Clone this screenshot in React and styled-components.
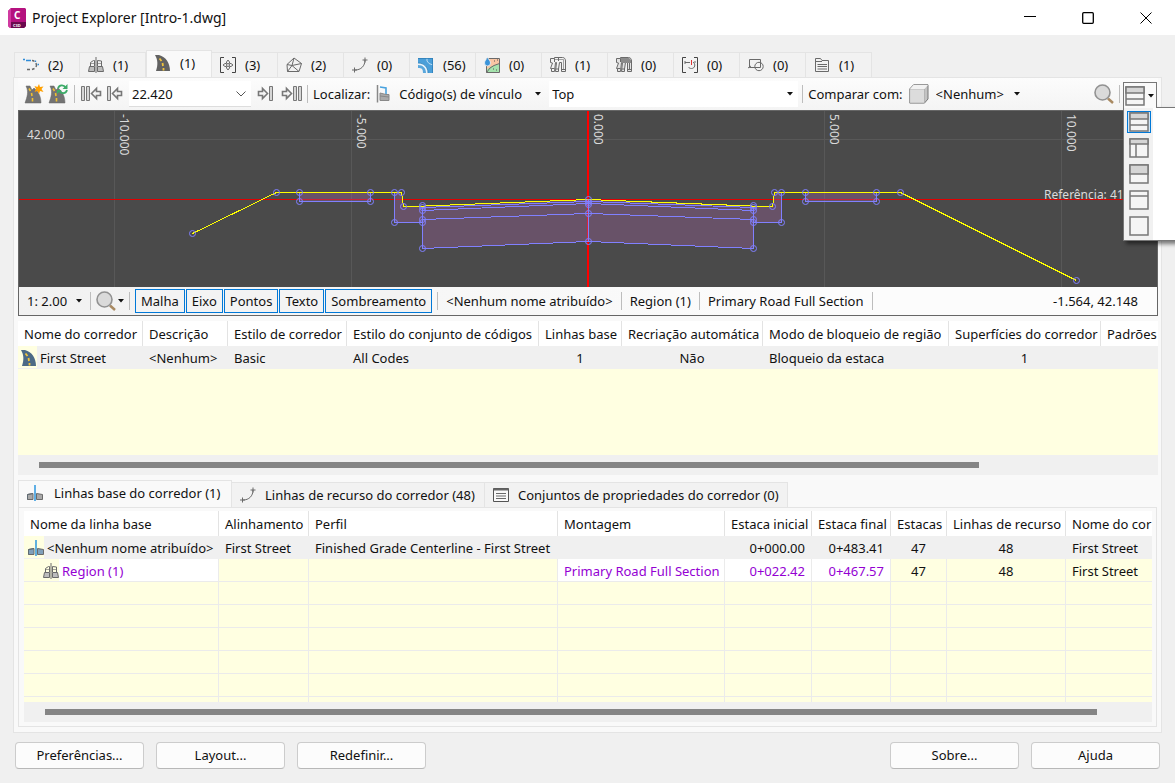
import React from 'react';
import styled, { createGlobalStyle, css } from 'styled-components';

const GlobalStyle = createGlobalStyle`
  *, *::before, *::after { box-sizing: border-box; }
  body {
    margin: 0;
    background: #f0f0f0;
    color: #111;
    font-family: "Noto Sans", "Open Sans", sans-serif;
    font-size: 13px;
    line-height: 18px;
  }
  button, select, input { font: inherit; color: inherit; }
`;

/* ---------- window frame ---------- */

const Window = styled.div`
  min-height: 100vh;
  display: flex;
  flex-direction: column;
  overflow: hidden;
`;

const TitleBar = styled.header`
  display: flex;
  align-items: center;
  height: 35px;
  padding-left: 8px;
  background: #fff;
`;

const Title = styled.h1`
  flex: 1;
  margin: 0 0 0 6px;
  font-size: 14px;
  font-weight: 400;
  line-height: 20px;
`;

const CaptionButton = styled.button`
  display: grid;
  place-items: center;
  width: 58px;
  height: 32px;
  padding: 0;
  border: 0;
  background: none;
`;

const Main = styled.main`
  flex: 1;
  padding: 15px 13px 0;
`;

/* ---------- tabs ---------- */

const TabList = styled.div`
  display: flex;
  align-items: flex-end;
  height: 27px;
  padding-left: 1px;
`;

const Tab = styled.button`
  display: flex;
  align-items: center;
  gap: ${(p) => p.$gap || 9}px;
  min-width: ${(p) => p.$width}px;
  height: 25px;
  padding: 0 0 0 8px;
  border: 1px solid #e4e4e4;
  border-left-width: 0;
  border-bottom: 0;
  background: #f2f2f2;
  white-space: nowrap;
  &:first-child { border-left-width: 1px; }
  ${(p) => p.$active && css`
    height: 27px;
    padding-bottom: 2px;
    border-left-width: 1px;
    background: #f9f9f9;
    z-index: 1;
  `}
  svg { flex: none; }
`;

const Panel = styled.section`
  padding: 0 3px 5px 4px;
  border: 1px solid #e4e4e4;
  background: #f9f9f9;
`;

/* ---------- toolbar ---------- */

const Toolbar = styled.div`
  display: flex;
  align-items: center;
  height: 32px;
  padding-left: 4px;
  background: linear-gradient(#fcfcfc, #f4f4f4);
  white-space: nowrap;
`;

const ToolButton = styled.button`
  display: grid;
  place-items: center;
  flex: none;
  width: ${(p) => p.$width || 24}px;
  height: 26px;
  padding: 0;
  border: 0;
  background: none;
`;

const Separator = styled.span`
  flex: none;
  width: 1px;
  height: 18px;
  margin: 0 ${(p) => p.$gap || 4}px;
  background: #bdbdbd;
`;

const SelectBox = styled.span`
  position: relative;
  display: inline-flex;
  align-items: center;
  flex: ${(p) => (p.$grow ? '0 1 249px' : 'none')};
  height: 26px;
  margin-left: ${(p) => p.$before || 0}px;
  background: ${(p) => (p.$filled ? '#fff' : 'none')};
  border-bottom: ${(p) => (p.$line ? '1px solid #ddd' : '0')};
  > svg {
    position: absolute;
    right: ${(p) => p.$inset || 5}px;
    pointer-events: none;
  }
`;

const Select = styled.select`
  appearance: none;
  width: ${(p) => (p.$width ? `${p.$width}px` : '100%')};
  height: 24px;
  padding: 0 0 0 3px;
  border: 0;
  background: none;
  outline: 0;
`;

const Label = styled.label`
  flex: none;
  margin: 0 6px 0 1px;
`;

const Spacer = styled.span`
  flex: 1;
`;

const LayoutPicker = styled.div`
  position: relative;
  align-self: flex-end;
  flex: none;
  width: 35px;
  height: 28px;
`;

const LayoutToggle = styled.button`
  position: relative;
  z-index: 3;
  display: flex;
  align-items: center;
  gap: 3px;
  width: 34px;
  height: 26px;
  padding: 0 0 0 1px;
  border: 1px solid #777;
  border-bottom: 0;
  background: #fafafa;
`;

const LayoutMenu = styled.div`
  position: absolute;
  z-index: 2;
  top: 25px;
  left: 0;
  width: 190px;
  padding: 3px;
  border: 1px solid #777;
  background: linear-gradient(90deg, #f1f1f1 29px, #fff 29px);
  box-shadow: 3px 3px 4px rgba(0, 0, 0, 0.5);
`;

const LayoutItem = styled.button`
  display: grid;
  place-items: center;
  width: 24px;
  height: 22px;
  margin-bottom: 4px;
  padding: 0;
  border: 1px solid ${(p) => (p.$selected ? '#0078d7' : 'transparent')};
  background: ${(p) => (p.$selected ? '#cfe6f8' : 'none')};
  &:last-child { margin-bottom: 0; }
`;

/* ---------- section viewer ---------- */

const Viewer = styled.div`
  border: 1px solid #666;
`;

const Drawing = styled.svg`
  display: block;
  width: 100%;
  height: 176px;
  background: #4a4a4a;
  text { fill: #dadada; font-size: 12px; }
`;

const StatusBar = styled.div`
  display: flex;
  align-items: center;
  height: 28px;
  padding: 0 19px 0 5px;
  background: linear-gradient(90deg, #f1f1f1, #fcfcfc 70%);
  white-space: nowrap;
`;

const Toggle = styled.button`
  height: 24px;
  margin-right: 1px;
  padding: 0 5px;
  border: 1px solid #0078d7;
  background: #f3f3f3;
`;

const StatusText = styled.span`
  padding: 0 4px;
`;

/* ---------- tables ---------- */

const Grid = styled.div`
  height: ${(p) => p.$height}px;
  margin-top: ${(p) => p.$before}px;
  overflow: hidden;
  background: #ffffe1;
`;

const Table = styled.table`
  width: 100%;
  table-layout: fixed;
  border-collapse: separate;
  border-spacing: 0;
  white-space: nowrap;
`;

const Th = styled.th`
  height: 25px;
  padding: 0 0 0 6px;
  overflow: hidden;
  border-right: 1px solid #e3e3e3;
  background: #fff;
  font-weight: 400;
  text-align: left;
  &:last-child { border-right: 0; }
`;

const Td = styled.td`
  height: 23px;
  padding: 1px 6px 0;
  overflow: hidden;
  border-right: 1px solid ${(p) => (p.$shade ? '#f0f0f0' : '#ebebeb')};
  border-bottom: 1px solid ${(p) => (p.$shade ? '#f0f0f0' : '#ebebeb')};
  background: ${(p) => (p.$shade ? '#f0f0f0' : p.$edit ? '#fff' : 'transparent')};
  color: ${(p) => (p.$edit ? '#9400d3' : 'inherit')};
  text-align: ${(p) => p.$align || 'left'};
  &:last-child { border-right: 0; }
`;

const NameCell = styled.span`
  display: flex;
  align-items: center;
  height: 21px;
  margin: 0 -6px;
`;

const NameIcon = styled.span`
  display: flex;
  justify-content: flex-end;
  align-items: center;
  width: ${(p) => p.$width}px;
  height: 23px;
  margin-right: 3px;
  background: #ffffe1;
`;

const ScrollTrack = styled.div`
  height: 20px;
  padding: 7px 0 0 21px;
  background: #f0f0f0;
`;

const ScrollThumb = styled.div`
  height: 6px;
  width: ${(p) => p.$share}%;
  background: #858585;
`;

const DetailTabs = styled(TabList)`
  margin-top: 5px;
  padding-left: 0;
`;

const DetailPanel = styled.div`
  margin-right: 1px;
  padding: 0 4px 4px 5px;
  border: 1px solid #e4e4e4;
`;

/* ---------- footer ---------- */

const Footer = styled.footer`
  display: flex;
  gap: 12px;
  padding: 9px 15px 14px;
`;

const PushButton = styled.button`
  width: 129px;
  height: 27px;
  padding: 0 0 1px;
  border: 1px solid #ccc;
  border-bottom-color: #b8b8b8;
  border-radius: 4px;
  background: #fcfcfc;
`;

/* ---------- icons ---------- */

const Svg = ({ w = 16, h = w, children, ...rest }) => (
  <svg width={w} height={h} viewBox={`0 0 ${w} ${h}`} fill="none" stroke="#6a6a6a" aria-hidden="true" {...rest}>
    {children}
  </svg>
);

const Logo = () => (
  <Svg w={18} h={20} stroke="none">
    <path d="M0 3 3 0H17l1 1V18l-2 2H2L0 18Z" fill="#b5127f" />
    <path d="M0 3 3 0V20H2L0 18Z" fill="#d03aa0" />
    <path d="M3 14H18V18l-2 2H3Z" fill="#6b0a4e" />
    <text x="6" y="11" fontSize="10" fontWeight="700" fill="#fff">C</text>
    <text x="5" y="19" fontSize="4" fontWeight="700" fill="#fff">C3D</text>
  </Svg>
);

const Caret = () => (
  <Svg w={6} h={4} stroke="none"><path d="M0 0H6L3 3.5Z" fill="#111" /></Svg>
);

const Chevron = () => (
  <Svg w={10} h={6} stroke="#555"><path d="M.5.5 5 5 9.5.5" /></Svg>
);

const AlignmentIcon = () => (
  <Svg>
    <path d="M0 2.500H2M3 3.500H8" stroke="#2e8bd8" strokeWidth="1.300" />
    <path d="M9 3.500C10 3.500 11 4 11.500 4.500M13 6 13.500 8.500 13 10M11.500 11.500 9 12.500M7 12.500H4" strokeWidth="1.400" />
    <path d="M12.500 3.500V5M14.500 7.500H16" stroke="#2e8bd8" strokeWidth="1.300" />
  </Svg>
);

const AssemblyIcon = () => (
  <Svg>
    <path d="M8 0V16" />
    <path d="M1.500 9.500H6.500V14.500H.5ZM9.500 9.500H14.500L15.500 14.500H9.500Z" fill="#bdbdbd" />
    <path d="M2.500 9V5.500L5.500 3.500H6.500V9M9.500 9V3.500L13.500 4V9" />
    <path d="M3 6.500H6M10 6.500H13" strokeOpacity=".6" />
  </Svg>
);

const BaselineIcon = ({ fill = '#a8a8a8' }) => (
  <Svg>
    <path d="M.5 9.500 6 8.500V14.500H.5ZM9.500 8.500 15.500 9.500V14.500H9.500Z" fill={fill} />
    <path d="M.5 14.500V9.500L6 8.500" stroke="#5f6a72" />
    <path d="M8 0V16" stroke="#1e90dd" strokeWidth="1.4" />
  </Svg>
);

const RoadIcon = ({ fill = '#626262' }) => (
  <Svg stroke="none">
    <path d="M0 0H4C11 2 15 8 15 16H1C3 10 3 5 0 0Z" fill={fill} />
    <path d="M4.500 3.500 6.500 6M7.500 8 8 11M8.500 13V15.500" stroke="#f2c53d" strokeWidth="1.800" />
  </Svg>
);

const IntersectionIcon = () => (
  <Svg>
    <path d="M4 .5H.5V15.500H4M12 .5H15.500V15.500H12" stroke="#444" />
    <path d="M6.500 5 8 3 9.500 5V6.500H11L13 8 11 9.500H9.500V11L8 13 6.500 11V9.500H5L3 8 5 6.500H6.500Z" />
    <circle cx="8" cy="8" r="1.500" />
  </Svg>
);

const SurfaceIcon = () => (
  <Svg>
    <path d="M8 1 15.500 6.500 13 14.500H1.500L1 7.500ZM8 1 6 8.500 1 7.500M6 8.500 13 14.500M6 8.500 1.500 14.500M6 8.500 15.500 6.500" />
  </Svg>
);

const FeatureLineIcon = () => (
  <Svg>
    <path d="M3 13C9 13 13 9 13 3" />
    <path d="M2.500 10.500V15.500M0 13H5M13 .5V5.500M10.500 3H15.500" />
  </Svg>
);

const ParcelIcon = () => (
  <Svg stroke="none">
    <path d="M0 1H15V16H10C10 10 6 6 0 6Z" fill="#4b9fd9" />
    <path d="M0 6C6 6 10 10 10 16H5C5 12 4 11 0 11Z" fill="#eaf4fb" />
    <path d="M0 8C5 8 8 11 8 16H5C5 12 4 11 0 11Z" fill="#5aa7dc" />
    <path d="M9 1V4L11 6.500 15 8" stroke="#bcdcf2" />
    <path d="M0 6C6 6 10 10 10 16M0 1.500H15M14.500 1V16" stroke="#2f7fb8" strokeWidth=".8" />
  </Svg>
);

const CatchmentIcon = () => (
  <Svg>
    <path d="M2.500 1.500H15.500V15.500H2.500Z" fill="#f9c6a4" />
    <path d="M3 15V12L8 9 15 7V15Z" fill="#a5e3ad" stroke="none" />
    <path d="M2.500 15.500 6 11 10 8.500 15.500 6.500" />
    <path d="M3.500 0C5 3 6.500 4 6.500 6A3 3 0 0 1 .5 6C.5 4 2 3 3.500 0Z" fill="#3b94d9" stroke="#f2f2f2" strokeWidth=".8" />
    <path d="M10 4h1M13 3h1M9 12h1M12 13h1" stroke="#555" />
  </Svg>
);

const PipeIcon = ({ fill = '#f2f2f2' }) => (
  <Svg>
    <path d="M.5 1.500H4.500V.5H12.500C14.500.5 15.500 2 15.500 4V14.500H11.500V5.500H9.500L8.500 12V14.500H5.500L6.500 5.500H5.500L4.500 14.500H1.500V11.500H.5L2.500 6 .5 5.500Z" fill={fill} />
    <path d="M4.500 1.500V5M11.500 12.500H15.500M5.500 12H8.500M1.500 11.500H4.500M8.500.5V4" />
    <path d="M5 2.500H13.500V12" strokeOpacity=".6" />
  </Svg>
);

const PressureIcon = () => (
  <Svg>
    <path d="M.5 1.500H4.500V.5H12.500C14.500.5 15.500 2 15.500 4V14.500H11.500V5.500H9.500L8.500 12V14.500H5.500L6.500 5.500H5.500L4.500 14.500H1.500V11.500H.5L2.500 6 .5 5.500Z" fill="#e2e2e2" />
    <path d="M5 1H13L15 3V6H5Z" fill="#8a8a8a" stroke="none" />
    <path d="M4.500 1.500V5M11.500 12.500H15.500M5.500 12H8.500M1.500 11.500H4.500M13.500 6V12" />
  </Svg>
);

const ValveIcon = () => (
  <Svg>
    <path d="M4 .5H.5V15.500H4M12 .5H15.500V15.500H12" stroke="#444" />
    <path d="M3 5.500H8M3 4V7M13 4V6" />
    <path d="M9.500 3V8" stroke="#d33" />
    <path d="M11 5C14 7 13 11.500 9.500 11.500C8 11.500 7 11 6.500 10" />
  </Svg>
);

const ShapesIcon = () => (
  <Svg>
    <path d="M1.500 2.500H12.500V10.500H1.500Z" />
    <circle cx="11" cy="9.500" r="4.200" />
    <path d="M0 11 3 9" />
  </Svg>
);

const PropertySetIcon = () => (
  <Svg>
    <path d="M1.500 1.500H6.500L8 3.500H14.500V14.500H1.500Z" />
    <path d="M1.500 4.500H8M4 7.500H13M4 9.500H13M4 12H13M3 7.500h.5M3 9.500h.5M3 12h.5" />
  </Svg>
);

const ListIcon = () => (
  <Svg>
    <path d="M.5 1.500H15.500V14.500H.5Z" fill="#fafafa" stroke="#555" />
    <path d="M.5 2.500H15.500" strokeWidth="2" stroke="#666" />
    <path d="M3 6.500H13M3 9H13M3 11.500H13" />
  </Svg>
);

const RoadBase = () => (
  <>
    <path d="M2 2C5 8 3 13 1 19H17C17 12 14 7 10 4L8 6 6 2Z" fill="#737373" stroke="#666" strokeWidth=".5" />
    <path d="M5 4.500 6.500 7M7.500 9 8 12M8.500 14V17.500" stroke="#f0c030" strokeWidth="1.600" />
  </>
);

const CreateRoadIcon = () => (
  <Svg w={20}>
    <RoadBase />
    <path d="M15 0 16 3 19.500 2.500 17.500 5 19.500 8 16 7 15 10 13.500 7 10.500 8 12 5 10.500 2 13.500 3Z" fill="#ffa000" stroke="none" />
  </Svg>
);

const RebuildRoadIcon = () => (
  <Svg w={20}>
    <RoadBase />
    <path d="M10 4.500C11 .5 16 .5 17.500 3.500M19 6C18 10 13 10 11.500 7" stroke="#3cab68" strokeWidth="1.800" />
    <path d="M19.500 0V5H14.500ZM9 10V6H13.500Z" fill="#3cab68" stroke="none" />
  </Svg>
);

const SkipIcon = ({ bars, flip }) => {
  const w = bars === 2 ? 21 : 16;
  const shift = bars === 2 ? 5 : 0;
  return (
    <Svg w={w} h={18} stroke="#777">
      <g transform={flip ? `translate(${w} 0) scale(-1 1)` : undefined}>
        <path d="M.5 1.500h3v14h-3Z" fill="#d6d6d6" />
        {bars === 2 && <path d="M5.500 1.500h3v14h-3Z" fill="#d6d6d6" />}
        <path transform={`translate(${shift} 0)`} d="M5.500 8.500 10.500 3.500V6.500H14.500V10.500H10.500V13.500Z" fill="#f5f5f5" strokeWidth="1.600" />
      </g>
    </Svg>
  );
};

const LinkCodeIcon = () => (
  <Svg w={16} h={20}>
    <path d="M1.500 1V18.500" stroke="#888" strokeWidth="1.500" />
    <path d="M4 3 10 4V10" stroke="#4aa3df" strokeWidth="1.600" />
    <path d="M4 9 10 10.500H13V16.500H4ZM4 12 13 13" fill="#aaa" stroke="#888" />
  </Svg>
);

const CubeIcon = () => (
  <Svg w={20}>
    <path d="M.7 5 4.500.8H19V15L15.500 19H.7Z" fill="#c3c3c3" stroke="#777" />
    <path d="M.7 5H15.500V19H.7Z" fill="#dcdcdc" stroke="#999" strokeWidth=".5" />
    <path d="M1 5 4.500 1H19L15.500 5Z" fill="#f2f2f2" stroke="none" />
  </Svg>
);

const Magnifier = () => (
  <Svg w={20}>
    <path d="M14 14.500 19 19" stroke="#a98a62" strokeWidth="2.500" />
    <circle cx="8.500" cy="8.500" r="7.500" fill="#dadada" stroke="#929292" strokeWidth="1.600" />
  </Svg>
);

const LayoutIcon = ({ head, lines, split }) => (
  <Svg w={20} stroke="#777" strokeWidth="1.500">
    <path d="M1 1H19V19H1Z" fill="#f5f5f5" />
    {head && <path d={`M1 1H19V${head}H1Z`} fill="#d5d5d5" />}
    {lines && lines.map((y) => <path key={y} d={`M1 ${y}H19`} />)}
    {split && <path d={`M7 ${split}V19`} />}
  </Svg>
);

const layouts = [
  { name: 'Três painéis', head: 7, lines: [13] },
  { name: 'Painéis divididos', head: 6, split: 6 },
  { name: 'Dois painéis', head: 10 },
  { name: 'Cabeçalho', lines: [6] },
  { name: 'Painel único' },
];

/* ---------- cross section drawing ---------- */

const nodes = [
  [192, 233], [276, 192], [299, 192], [299, 201], [370, 201], [370, 192], [394, 192], [401, 192],
  [403, 206], [394, 222], [422, 205], [422, 207], [422, 210], [422, 219], [422, 222], [422, 248],
  [588, 199], [588, 202], [588, 204], [588, 213], [588, 241],
  [753, 205], [753, 207], [753, 210], [753, 219], [753, 222], [753, 248], [781, 222], [772, 206],
  [774, 192], [781, 192], [805, 192], [805, 201], [876, 201], [876, 192], [900, 192], [1076, 280],
];

const stations = [[114, '-10.000'], [351, '-5.000'], [588, '0.000'], [824, '5.000'], [1061, '10.000']];

const CrossSection = () => (
  <Drawing viewBox="19 111 1138 176" role="img" aria-label="Seção do corredor">
    <g stroke="#585858">
      <path d="M-2000 139.500H3000" />
      {stations.map(([x]) => <path key={x} d={`M${x + 0.5} 111V287`} />)}
    </g>
    <path d="M-2000 199.500H3000" stroke="#e00000" shapeRendering="crispEdges" />
    <path d="M588 111V287" stroke="#f00" strokeWidth="2" />
    <g fill="#a060a0" fillOpacity=".35">
      <path d="M299.500 192.500H370.500V201.500H299.500ZM805.500 192.500H876.500V201.500H805.500Z" />
      <path d="M394.500 192.500H401.500L403.500 206.500 588.500 199.500 772.500 206.500 774.500 192.500H781.500V222.500H753.500V248.500L588.500 241.500 422.500 248.500V222.500H394.500Z" />
    </g>
    <g fill="none" stroke="#8080ff" shapeRendering="crispEdges">
      <path d="M299.500 192.500V201.500H370.500V192.500M805.500 192.500V201.500H876.500V192.500" />
      <path d="M394.500 192.500V222.500H422.500M781.500 192.500V222.500H753.500" />
      <path d="M422.500 205.500V248.500L588.500 241.500 753.500 248.500V205.500" />
      <path d="M422.500 207.500 588.500 201.500 753.500 207.500M422.500 210.500 588.500 203.500 753.500 210.500M422.500 219.500 588.500 213.500 753.500 219.500" />
      <path d="M588.500 200V241" />
    </g>
    <path
      d="M192.500 233.500 276.500 192.500H401.500L403.500 206.500H412L588.500 199.500 764 206.500H772.500L774.500 192.500H900.500L1076.500 280.500"
      fill="none" stroke="#ff0" shapeRendering="crispEdges"
    />
    <g fill="none" stroke="#8080ff">
      {nodes.map(([x, y]) => <circle key={`${x}-${y}`} cx={x + 0.5} cy={y + 0.5} r="3" />)}
    </g>
    <text x="27" y="139">42.000</text>
    {stations.map(([x, name]) => (
      <text key={name} transform={`translate(${x + 6} 114) rotate(90)`}>{name}</text>
    ))}
    <text x="1044" y="199">Referência: 41</text>
  </Drawing>
);

/* ---------- data ---------- */

const tabs = [
  ['Alinhamentos', AlignmentIcon, 2], ['Montagens', AssemblyIcon, 1], ['Corredores', RoadIcon, 1],
  ['Interseções', IntersectionIcon, 3], ['Superfícies', SurfaceIcon, 2], ['Linhas de recurso', FeatureLineIcon, 0],
  ['Lotes', ParcelIcon, 56], ['Bacias', CatchmentIcon, 0], ['Redes de tubulação', PipeIcon, 1],
  ['Redes de pressão', PressureIcon, 0], ['Acessórios', ValveIcon, 0], ['Formas', ShapesIcon, 0],
  ['Conjuntos de objetos', PropertySetIcon, 1],
];

const corridorColumns = [
  ['Nome do corredor', 125], ['Descrição', 85], ['Estilo de corredor', 119],
  ['Estilo do conjunto de códigos', 192], ['Linhas base', 83], ['Recriação automática', 141],
  ['Modo de bloqueio de região', 186], ['Superfícies do corredor', 152], ['Padrões'],
];

const baselineColumns = [
  ['Nome da linha base', 195], ['Alinhamento', 90], ['Perfil', 249], ['Montagem', 167],
  ['Estaca inicial', 87], ['Estaca final', 79], ['Estacas', 56], ['Linhas de recurso', 119],
  ['Nome do cor'],
];

const Head = ({ columns }) => (
  <>
    <colgroup>
      {columns.map(([name, width]) => <col key={name} width={width} />)}
    </colgroup>
    <thead>
      <tr>{columns.map(([name]) => <Th key={name} scope="col">{name}</Th>)}</tr>
    </thead>
  </>
);

export default function App() {
  return (
    <Window>
      <GlobalStyle />
      <TitleBar>
        <Logo />
        <Title>Project Explorer [Intro-1.dwg]</Title>
        <CaptionButton aria-label="Minimizar"><Svg w={12} stroke="#000"><path d="M0 4.500H12" /></Svg></CaptionButton>
        <CaptionButton aria-label="Maximizar">
          <Svg w={12} stroke="#000" strokeWidth="1.300"><rect x=".7" y=".7" width="10.600" height="10.600" rx="1" /></Svg>
        </CaptionButton>
        <CaptionButton aria-label="Fechar"><Svg w={12} stroke="#000"><path d="M.5.5 11.500 11.500M11.500.5.5 11.500" /></Svg></CaptionButton>
      </TitleBar>

      <Main>
        <TabList role="tablist">
          {tabs.map(([name, Icon, count]) => (
            <Tab key={name} role="tab" aria-label={`${name} (${count})`} aria-selected={name === 'Corredores'} $active={name === 'Corredores'} $width={66}>
              <Icon />({count})
            </Tab>
          ))}
        </TabList>

        <Panel>
          <Toolbar>
            <ToolButton aria-label="Criar corredor"><CreateRoadIcon /></ToolButton>
            <ToolButton aria-label="Recriar corredor"><RebuildRoadIcon /></ToolButton>
            <Separator />
            <ToolButton aria-label="Primeira estaca"><SkipIcon bars={2} /></ToolButton>
            <ToolButton aria-label="Estaca anterior"><SkipIcon bars={1} /></ToolButton>
            <SelectBox $filled $line $before={2}>
              <Select aria-label="Estaca" $width={122}><option>22.420</option></Select>
              <Chevron />
            </SelectBox>
            <ToolButton aria-label="Próxima estaca" $width={28}><SkipIcon bars={1} flip /></ToolButton>
            <ToolButton aria-label="Última estaca"><SkipIcon bars={2} flip /></ToolButton>
            <Separator />
            <Label htmlFor="locate">Localizar:</Label>
            <LinkCodeIcon />
            <SelectBox $before={4}>
              <Select id="locate" $width={150}><option>Código(s) de vínculo</option></Select>
              <Caret />
            </SelectBox>
            <SelectBox $filled $grow $before={3}>
              <Select aria-label="Código"><option>Top</option></Select>
              <Caret />
            </SelectBox>
            <Separator />
            <Label htmlFor="compare">Comparar com:</Label>
            <CubeIcon />
            <SelectBox $before={4}>
              <Select id="compare" $width={92}><option>&lt;Nenhum&gt;</option></Select>
              <Caret />
            </SelectBox>
            <Spacer />
            <ToolButton aria-label="Zoom"><Magnifier /></ToolButton>
            <Separator $gap={3} />
            <LayoutPicker>
              <LayoutToggle aria-label="Layout dos painéis" aria-expanded="true">
                <LayoutIcon head={7} lines={[13]} />
                <Caret />
              </LayoutToggle>
              <LayoutMenu role="menu">
                {layouts.map(({ name, ...shape }, i) => (
                  <LayoutItem key={name} role="menuitemradio" aria-checked={i === 0} aria-label={name} $selected={i === 0}>
                    <LayoutIcon {...shape} />
                  </LayoutItem>
                ))}
              </LayoutMenu>
            </LayoutPicker>
          </Toolbar>

          <Viewer>
            <CrossSection />
            <StatusBar>
              <SelectBox>
                <Select aria-label="Exagero" $width={63}><option>1: 2.00</option></Select>
                <Caret />
              </SelectBox>
              <Separator $gap={3} />
              <ToolButton aria-label="Opções de zoom"><Magnifier /></ToolButton>
              <Caret />
              <Separator $gap={5} />
              {['Malha', 'Eixo', 'Pontos', 'Texto', 'Sombreamento'].map((name) => (
                <Toggle key={name} aria-pressed="true">{name}</Toggle>
              ))}
              <Separator />
              <StatusText>&lt;Nenhum nome atribuído&gt;</StatusText>
              <Separator />
              <StatusText>Region (1)</StatusText>
              <Separator />
              <StatusText>Primary Road Full Section</StatusText>
              <Separator />
              <Spacer />
              <span>-1.564, 42.148</span>
            </StatusBar>
          </Viewer>

          <Grid $height={134} $before={5}>
            <Table>
              <Head columns={corridorColumns} />
              <tbody>
                <tr>
                  <Td $shade>
                    <NameCell><NameIcon $width={19}><RoadIcon fill="#4c6a86" /></NameIcon>First Street</NameCell>
                  </Td>
                  <Td $shade>&lt;Nenhum&gt;</Td>
                  <Td $shade>Basic</Td>
                  <Td $shade>All Codes</Td>
                  <Td $shade $align="center">1</Td>
                  <Td $shade $align="center">Não</Td>
                  <Td $shade>Bloqueio da estaca</Td>
                  <Td $shade $align="center">1</Td>
                  <Td $shade />
                </tr>
              </tbody>
            </Table>
          </Grid>
          <ScrollTrack><ScrollThumb $share={84} /></ScrollTrack>

          <DetailTabs role="tablist">
            <Tab role="tab" aria-selected="true" $active $gap={11} $width={214}><BaselineIcon />Linhas base do corredor (1)</Tab>
            <Tab role="tab" aria-selected="false" $width={253}><FeatureLineIcon />Linhas de recurso do corredor (48)</Tab>
            <Tab role="tab" aria-selected="false" $width={303}><ListIcon />Conjuntos de propriedades do corredor (0)</Tab>
          </DetailTabs>
          <DetailPanel>
            <Grid $height={191} $before={3}>
              <Table>
                <Head columns={baselineColumns} />
                <tbody>
                  <tr>
                    <Td $shade>
                      <NameCell><NameIcon $width={20}><BaselineIcon fill="#7f9fba" /></NameIcon>&lt;Nenhum nome atribuído&gt;</NameCell>
                    </Td>
                    <Td $shade>First Street</Td>
                    <Td $shade>Finished Grade Centerline - First Street</Td>
                    <Td $shade />
                    <Td $shade $align="right">0+000.00</Td>
                    <Td $shade $align="right">0+483.41</Td>
                    <Td $shade $align="center">47</Td>
                    <Td $shade $align="center">48</Td>
                    <Td $shade>First Street</Td>
                  </tr>
                  <tr>
                    <Td $edit>
                      <NameCell><NameIcon $width={35}><AssemblyIcon /></NameIcon>Region (1)</NameCell>
                    </Td>
                    <Td />
                    <Td />
                    <Td $edit>Primary Road Full Section</Td>
                    <Td $edit $align="right">0+022.42</Td>
                    <Td $edit $align="right">0+467.57</Td>
                    <Td $align="center">47</Td>
                    <Td $align="center">48</Td>
                    <Td>First Street</Td>
                  </tr>
                  {[0, 1, 2, 3, 4, 5].map((row) => (
                    <tr key={row}>{baselineColumns.map(([name]) => <Td key={name} />)}</tr>
                  ))}
                </tbody>
              </Table>
            </Grid>
            <ScrollTrack><ScrollThumb $share={95} /></ScrollTrack>
          </DetailPanel>
        </Panel>
      </Main>

      <Footer>
        <PushButton>Preferências...</PushButton>
        <PushButton>Layout...</PushButton>
        <PushButton>Redefinir...</PushButton>
        <Spacer />
        <PushButton>Sobre...</PushButton>
        <PushButton>Ajuda</PushButton>
      </Footer>
    </Window>
  );
}
